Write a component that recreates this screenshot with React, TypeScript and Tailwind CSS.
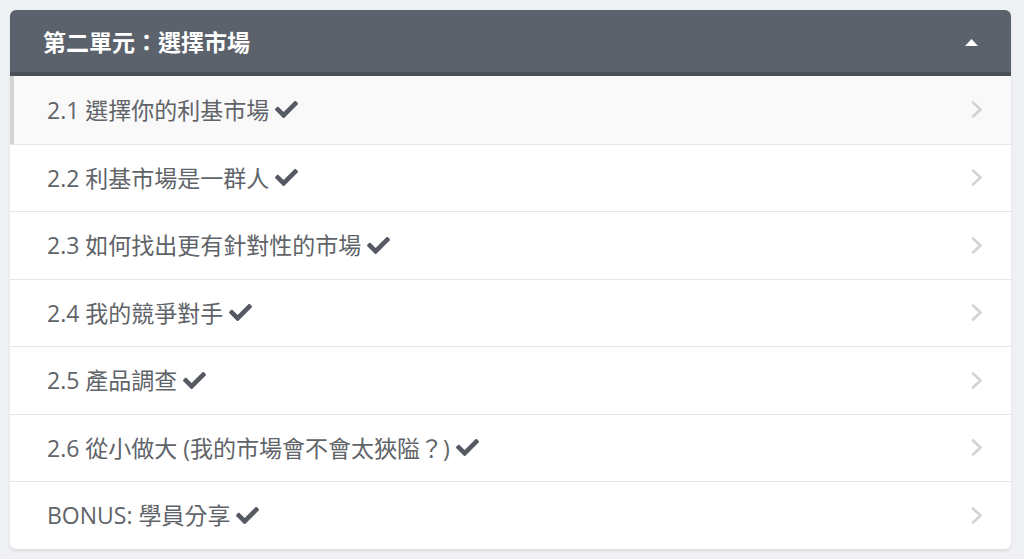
import { FaCheck } from 'react-icons/fa';

const lessons = [
  { title: '2.1 選擇你的利基市場', active: true },
  { title: '2.2 利基市場是一群人' },
  { title: '2.3 如何找出更有針對性的市場' },
  { title: '2.4 我的競爭對手' },
  { title: '2.5 產品調查' },
  { title: '2.6 從小做大 (我的市場會不會太狹隘？)' },
  { title: 'BONUS: 學員分享' },
];

export default function App() {
  return (
    <div
      className="min-h-[559px] bg-[#eef0f4] pt-[10px] pl-[10px] pr-[13px]"
      style={{ fontFamily: '"Open Sans", "Noto Sans CJK TC", sans-serif' }}
    >
      <div className="rounded-[6px] bg-white shadow-[0_2px_3px_rgba(0,0,0,0.08)] overflow-hidden">
        <div className="flex h-[66px] items-center justify-between border-b-[4px] border-[#4b5058] bg-[#5c626c] pl-[33px] pr-[33px] pt-[2px]">
          <h2 className="text-[23px] font-bold text-white">第二單元：選擇市場</h2>
          <svg width="13" height="7" viewBox="0 0 13 7" className="fill-white">
            <path d="M6.5 0 L13 7 L0 7 Z" />
          </svg>
        </div>
        <ul>
          {lessons.map((lesson, index) => (
            <li
              key={lesson.title}
              className={`flex h-[67.5px] items-center justify-between pr-[28px] ${
                index > 0 ? 'border-t border-[#e6e6e6]' : ''
              } ${lesson.active ? 'border-l-[4px] border-l-[#d4d4d4] bg-[#f9f9f9] pl-[33px]' : 'pl-[37px]'}`}
            >
              <span className="flex items-center text-[23px] text-[#606368]">
                {lesson.title}
                <FaCheck className="ml-[6px] text-[23px] text-[#555a62]" />
              </span>
              <svg width="12" height="17" viewBox="0 0 12 17" fill="none" className="stroke-[#d3d3d3]">
                <path d="M2 1.5 L9.5 8.5 L2 15.5" strokeWidth="2.6" strokeLinecap="round" strokeLinejoin="round" />
              </svg>
            </li>
          ))}
        </ul>
      </div>
    </div>
  );
}
